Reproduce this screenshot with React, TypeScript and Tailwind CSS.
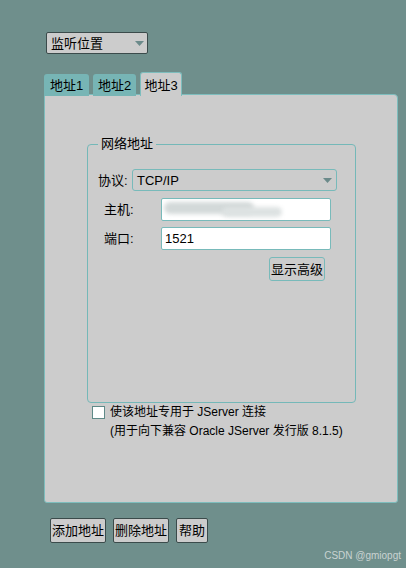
import React from "react";

const font = { fontFamily: '"Liberation Sans", "Noto Sans CJK SC", sans-serif' };

function Arrow() {
  return (
    <svg width="9" height="5" viewBox="0 0 9 5" className="block">
      <path d="M0 0 H9 L4.5 5 Z" fill="#6b8a8a" />
    </svg>
  );
}

export default function App() {
  return (
    <div
      className="relative w-[406px] h-[568px] overflow-hidden bg-[#6f8f8c] text-[12.5px] text-black leading-none"
      style={font}
    >
      {/* top dropdown */}
      <div className="pt-[32px] pl-[46px]">
        <div className="w-[102px] h-[22px] border border-[#3b4b4b] rounded-[2px] bg-[#cccccc] flex items-center justify-between pl-[4px] pr-[3px]">
          <span className="text-[13px]">监听位置</span>
          <Arrow />
        </div>
      </div>

      {/* tabs */}
      <div className="mt-[18px] ml-[44px] flex items-end gap-[4px] h-[24px] relative z-10">
        <div className="w-[45px] h-[22px] bg-[#77b5b5] rounded-t-[3px] flex items-center justify-center text-[13px]">地址1</div>
        <div className="w-[43px] h-[22px] bg-[#77b5b5] rounded-t-[3px] flex items-center justify-center text-[13px]">地址2</div>
        <div className="w-[42px] h-[24px] bg-[#cccccc] border border-b-0 border-[#7dbdbd] rounded-t-[3px] flex items-center justify-center text-[13px] pt-[1px]">地址3</div>
      </div>

      {/* panel */}
      <div className="-mt-[2px] ml-[44px] w-[354px] h-[409px] border border-[#7dbdbd] rounded-tr-[4px] rounded-b-[3px] bg-[#cccccc] relative">
        {/* fieldset */}
        <div className="mt-[49px] ml-[42px] w-[269px] h-[259px] border border-[#74b8b8] rounded-[4px] relative">
          <div className="absolute -top-[8px] left-[10px] px-[3px] bg-[#cccccc] text-[13px]">网络地址</div>

          <div className="mt-[24px] ml-[10px] flex items-center h-[22px]">
            <span className="w-[34px] text-[13px]">协议:</span>
            <div className="w-[205px] h-[22px] border border-[#78baba] rounded-[3px] flex items-center justify-between pl-[4px] pr-[4px]">
              <span className="text-[13px]">TCP/IP</span>
              <Arrow />
            </div>
          </div>

          <div className="mt-[7px] ml-[16px] flex items-center h-[23px]">
            <span className="w-[57px] text-[13px]">主机:</span>
            <div className="w-[170px] h-[23px] bg-white border border-[#78baba] rounded-[2px] relative overflow-hidden">
              <div className="absolute left-[2px] top-[3px] w-[90px] h-[12px] rounded-full bg-[#d3d9d9] blur-[2px]" />
              <div className="absolute left-[60px] top-[8px] w-[60px] h-[10px] rounded-full bg-[#dde2e2] blur-[2px]" />
            </div>
          </div>

          <div className="mt-[6px] ml-[16px] flex items-center h-[23px]">
            <span className="w-[57px] text-[13px]">端口:</span>
            <div className="w-[170px] h-[23px] bg-white border border-[#78baba] rounded-[2px] flex items-center pl-[3px]">
              <span className="text-[13px]">1521</span>
            </div>
          </div>

          <div className="mt-[7px] ml-[181px] w-[56px] h-[24px] border border-[#78baba] rounded-[3px] flex items-center justify-center text-[13px]">
            显示高级
          </div>
        </div>

        {/* checkbox */}
        <div className="mt-[3px] ml-[47px] flex items-start">
          <div className="w-[13px] h-[13px] bg-white border border-[#5f8a88]" />
          <div className="ml-[5px] flex flex-col gap-[7px]">
            <span className="text-[12px]">使该地址专用于 JServer 连接</span>
            <span className="text-[12px]">(用于向下兼容 Oracle JServer 发行版 8.1.5)</span>
          </div>
        </div>
      </div>

      {/* bottom buttons */}
      <div className="mt-[15px] ml-[50px] flex gap-[7px]">
        <div className="w-[56px] h-[25px] border border-[#3b4b4b] rounded-[2px] bg-[#cccccc] flex items-center justify-center text-[13px]">添加地址</div>
        <div className="w-[56px] h-[25px] border border-[#3b4b4b] rounded-[2px] bg-[#cccccc] flex items-center justify-center text-[13px]">删除地址</div>
        <div className="w-[32px] h-[25px] border border-[#3b4b4b] rounded-[2px] bg-[#cccccc] flex items-center justify-center text-[13px]">帮助</div>
      </div>

      <div className="absolute right-[5px] bottom-[7px] text-[10px] text-[#c9d3d2]" style={{ fontFamily: '"Liberation Sans", sans-serif' }}>
        CSDN @gmiopgt
      </div>
    </div>
  );
}
